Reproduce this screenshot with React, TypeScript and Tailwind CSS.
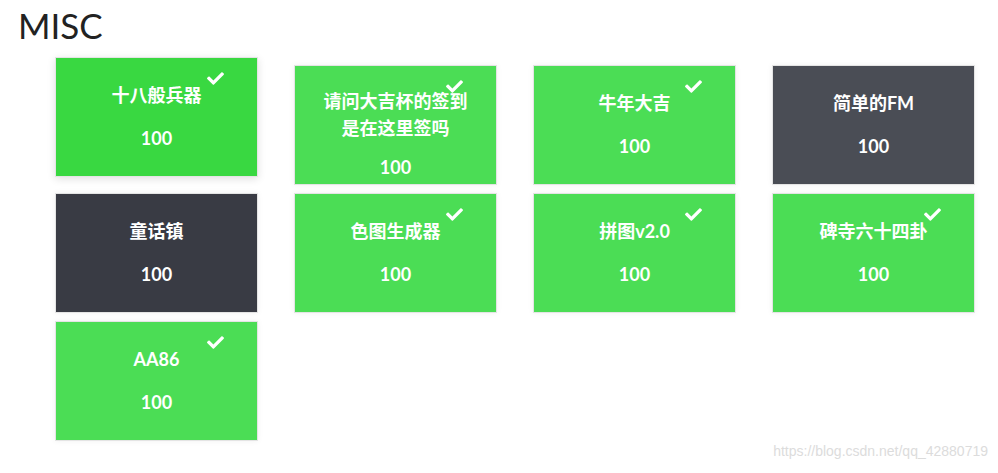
import { FaCheck } from "react-icons/fa";

type Challenge = {
  title: string[];
  score: number;
  solved: boolean;
  tone: string;
  hovered?: boolean;
};

const challenges: Challenge[] = [
  { title: ["十八般兵器"], score: 100, solved: true, tone: "bg-[#39d841]", hovered: true },
  { title: ["请问大吉杯的签到", "是在这里签吗"], score: 100, solved: true, tone: "bg-[#4bdd55]" },
  { title: ["牛年大吉"], score: 100, solved: true, tone: "bg-[#4bdd55]" },
  { title: ["简单的FM"], score: 100, solved: false, tone: "bg-[#4a4d55]" },
  { title: ["童话镇"], score: 100, solved: false, tone: "bg-[#393b44]" },
  { title: ["色图生成器"], score: 100, solved: true, tone: "bg-[#4bdd55]" },
  { title: ["拼图v2.0"], score: 100, solved: true, tone: "bg-[#4bdd55]" },
  { title: ["碑寺六十四卦"], score: 100, solved: true, tone: "bg-[#4bdd55]" },
  { title: ["AA86"], score: 100, solved: true, tone: "bg-[#4bdd55]" }
];

function ChallengeCard({ c }: { c: Challenge }) {
  const twoLines = c.title.length > 1;
  return (
    <div
      className={[
        "relative flex h-[120px] flex-col items-center border border-[#e4e4e4] text-white",
        c.tone,
        c.hovered
          ? "-translate-y-2 shadow-[0_2px_8px_rgba(0,0,0,0.12)]"
          : "shadow-[0_0_6px_rgba(0,0,0,0.06)]",
        twoLines ? "pt-[22px]" : "pt-[24px]"
      ].join(" ")}
    >
      {c.solved && (
        <FaCheck className="absolute right-[32px] top-[12px] h-[17px] w-[19px]" />
      )}
      <div className="text-center text-[18px] font-bold leading-[27px]">
        {c.title.map((line) => (
          <div key={line}>{line}</div>
        ))}
      </div>
      <div
        className={[
          "text-[18px] font-bold leading-[26px]",
          twoLines ? "mt-[12px]" : "mt-[16px]"
        ].join(" ")}
      >
        {c.score}
      </div>
    </div>
  );
}

export default function App() {
  return (
    <div
      className="relative h-[473px] w-[998px] overflow-hidden bg-white"
      style={{ fontFamily: "Lato, 'Noto Sans CJK SC', sans-serif" }}
    >
      <h1 className="pl-[18px] pt-[4px] text-[35px] font-normal leading-[42px] text-[#222]">
        MISC
      </h1>
      <div className="ml-[55px] mt-[19px] grid w-[920px] grid-cols-[repeat(4,203px)] gap-x-[36px] gap-y-[8px]">
        {challenges.map((c) => (
          <ChallengeCard key={c.title.join("")} c={c} />
        ))}
      </div>
      <div
        className="absolute bottom-[11px] right-[10px] text-[14px] text-[#dcdcdc]"
        style={{ fontFamily: "'Liberation Sans', Arial, sans-serif" }}
      >
        https://blog.csdn.net/qq_42880719
      </div>
    </div>
  );
}
